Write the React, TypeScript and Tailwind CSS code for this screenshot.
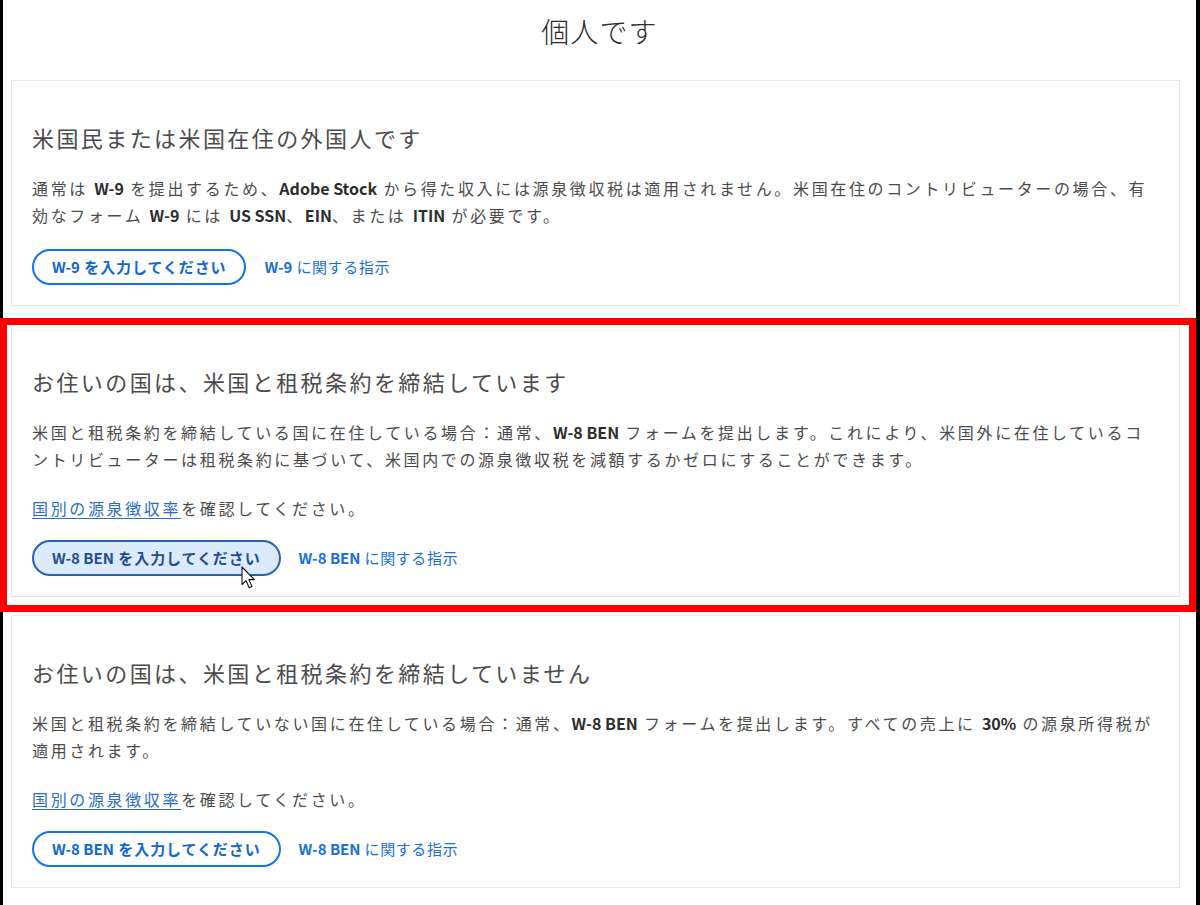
import type { ReactNode } from "react";

const B = ({ children }: { children: ReactNode }) => (
  <span className="font-bold tracking-normal text-[#2c2c2c]">{children}</span>
);

function Cursor() {
  return (
    <svg
      viewBox="0 0 16 24"
      className="pointer-events-none absolute left-[207px] top-[24px] h-6 w-4"
    >
      <path
        d="M1 1 L1 18.5 L5 14.6 L8.2 21.8 L11 20.6 L7.9 13.6 L13.4 13.6 Z"
        fill="#fff"
        stroke="#111"
        strokeWidth="1.1"
        strokeLinejoin="round"
      />
    </svg>
  );
}

function FormButton({ label, hover }: { label: ReactNode; hover?: boolean }) {
  return (
    <button
      className={
        hover
          ? "relative h-9 rounded-full border-2 border-[#2a63ad] bg-[#dcebfb] px-[18px] text-[15px] font-bold tracking-[0.06em] text-[#1f4f8f]"
          : "relative h-9 rounded-full border-2 border-[#1473e6] bg-white px-[18px] text-[15px] font-bold tracking-[0.06em] text-[#1166cf]"
      }
    >
      {label}
      {hover && <Cursor />}
    </button>
  );
}

function Actions({ form, hover, tight }: { form: string; hover?: boolean; tight?: boolean }) {
  return (
    <div className={tight ? "mt-[18px] flex items-center gap-[18px]" : "mt-5 flex items-center gap-[18px]"}>
      <FormButton
        hover={hover}
        label={
          <>
            <span className="tracking-normal">{form}</span> を入力してください
          </>
        }
      />
      <a className="text-[15px] tracking-[0.04em] text-[#1a6fd6]">
        <span className="font-semibold tracking-normal">{form}</span> に関する指示
      </a>
    </div>
  );
}

function RateLink() {
  return (
    <p className="mt-[22px] leading-[27px]">
      <a className="text-[#2b6cc4] underline underline-offset-[3px]">国別の源泉徴収率</a>
      を確認してください。
    </p>
  );
}

function Card({ title, children }: { title: string; children: ReactNode }) {
  return (
    <section className="border border-[#e8e8e8] bg-white pb-5 pl-5 pr-[26px] pt-10">
      <h2 className="text-[22px] leading-8 tracking-[0.11em] text-[#4b4b4b]">{title}</h2>
      <div className="mt-[22px] text-base tracking-[0.165em] text-[#4b4b4b]">{children}</div>
    </section>
  );
}

export default function App() {
  return (
    <div className="min-h-screen border-l-[3px] border-r-[4px] border-black bg-white pb-4 font-['Noto_Sans_CJK_JP',sans-serif]">
      <h1 className="h-20 pt-3 text-center text-[28px] font-light leading-[38px] tracking-[0.04em] text-[#2c2c2c]">
        個人です
      </h1>

      <div className="flex flex-col gap-[18px] pl-2 pr-4">
        <Card title="米国民または米国在住の外国人です">
          <p className="leading-[27px]">
            通常は <B>W-9</B> を提出するため、<B>Adobe Stock</B> から得た収入には源泉徴収税は適用されません。米国在住のコントリビューターの場合、有効なフォーム <B>W-9</B> には <B>US SSN</B>、<B>EIN</B>、または <B>ITIN</B> が必要です。
          </p>
          <Actions form="W-9" />
        </Card>

        <div className="relative">
          <Card title="お住いの国は、米国と租税条約を締結しています">
            <p className="leading-[27px]">
              米国と租税条約を締結している国に在住している場合：通常、<B>W-8 BEN</B> フォームを提出します。これにより、米国外に在住しているコントリビューターは租税条約に基づいて、米国内での源泉徴収税を減額するかゼロにすることができます。
            </p>
            <RateLink />
            <Actions form="W-8 BEN" hover tight />
          </Card>
          {/* annotation frame */}
          <div className="pointer-events-none absolute -bottom-[15px] -left-[11px] -right-4 -top-[6px] border-[7px] border-[#ff0000]" />
        </div>

        <Card title="お住いの国は、米国と租税条約を締結していません">
          <p className="leading-[27px]">
            米国と租税条約を締結していない国に在住している場合：通常、<B>W-8 BEN</B> フォームを提出します。すべての売上に <B>30%</B> の源泉所得税が適用されます。
          </p>
          <RateLink />
          <Actions form="W-8 BEN" tight />
        </Card>
      </div>
    </div>
  );
}
